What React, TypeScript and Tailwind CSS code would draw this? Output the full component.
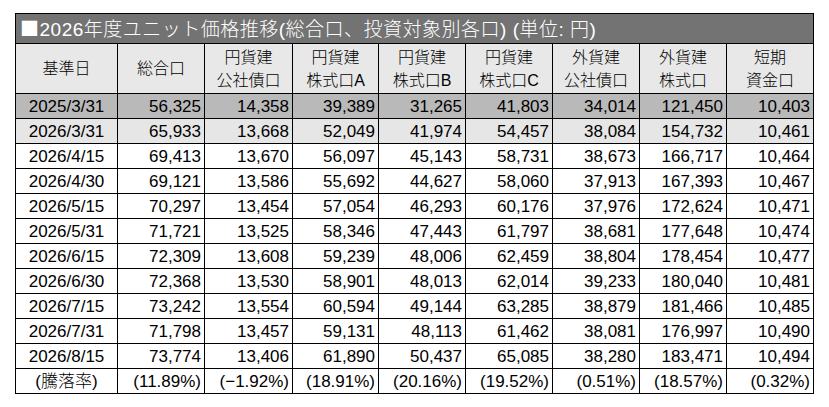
const COLS = [102, 87, 88, 86, 87, 87, 87, 87, 87];

const HEADERS: [string, string?][] = [
  ["基準日"],
  ["総合口"],
  ["円貨建", "公社債口"],
  ["円貨建", "株式口A"],
  ["円貨建", "株式口B"],
  ["円貨建", "株式口C"],
  ["外貨建", "公社債口"],
  ["外貨建", "株式口"],
  ["短期", "資金口"],
];

const ROWS: string[][] = [
  ["2025/3/31", "56,325", "14,358", "39,389", "31,265", "41,803", "34,014", "121,450", "10,403"],
  ["2026/3/31", "65,933", "13,668", "52,049", "41,974", "54,457", "38,084", "154,732", "10,461"],
  ["2026/4/15", "69,413", "13,670", "56,097", "45,143", "58,731", "38,673", "166,717", "10,464"],
  ["2026/4/30", "69,121", "13,586", "55,692", "44,627", "58,060", "37,913", "167,393", "10,467"],
  ["2026/5/15", "70,297", "13,454", "57,054", "46,293", "60,176", "37,976", "172,624", "10,471"],
  ["2026/5/31", "71,721", "13,525", "58,346", "47,443", "61,797", "38,681", "177,648", "10,474"],
  ["2026/6/15", "72,309", "13,608", "59,239", "48,006", "62,459", "38,804", "178,454", "10,477"],
  ["2026/6/30", "72,368", "13,530", "58,901", "48,013", "62,014", "39,233", "180,040", "10,481"],
  ["2026/7/15", "73,242", "13,554", "60,594", "49,144", "63,285", "38,879", "181,466", "10,485"],
  ["2026/7/31", "71,798", "13,457", "59,131", "48,113", "61,462", "38,081", "176,997", "10,490"],
  ["2026/8/15", "73,774", "13,406", "61,890", "50,437", "65,085", "38,280", "183,471", "10,494"],
  ["(騰落率)", "(11.89%)", "(−1.92%)", "(18.91%)", "(20.16%)", "(19.52%)", "(0.51%)", "(18.57%)", "(0.32%)"],
];

const rowBg = (i: number) => (i === 0 ? "bg-[#b9b9b9]" : i === 1 ? "bg-[#e6e6e6]" : "bg-white");

export default function App() {
  return (
    <div className="min-h-[407px] w-[829px] bg-white pl-[15px] pt-[13px] font-light text-black [font-family:'Liberation_Sans','Noto_Sans_CJK_JP',sans-serif]">
      <table className="table-fixed border-collapse border border-black" style={{ width: 798 }}>
        <colgroup>
          {COLS.map((w, i) => (
            <col key={i} style={{ width: w }} />
          ))}
        </colgroup>
        <thead>
          <tr className="h-[30px] bg-[#737373]">
            <th colSpan={9} className="border border-black px-[4px] text-left text-[19px] font-light leading-none tracking-[0.5px] text-white">
              <span className="[font-family:'Noto_Sans_CJK_JP',sans-serif]">■</span>
              2026年度ユニット価格推移(総合口、投資対象別各口) (単位: 円)
            </th>
          </tr>
          <tr className="h-[50px] bg-[#e8e8e8]">
            {HEADERS.map(([a, b], i) => (
              <th key={i} className="border border-black p-0 text-center text-[16px] font-light leading-[23px]">
                <div>{a}</div>
                {b && <div>{b}</div>}
              </th>
            ))}
          </tr>
        </thead>
        <tbody>
          {ROWS.map((row, i) => (
            <tr key={i} className={`h-[25px] ${rowBg(i)}`}>
              {row.map((v, j) => (
                <td
                  key={j}
                  className={`border border-black p-0 text-[17px] leading-none ${
                    j === 0 ? "text-center" : "pr-[3px] text-right"
                  }`}
                >
                  {v}
                </td>
              ))}
            </tr>
          ))}
        </tbody>
      </table>
    </div>
  );
}
